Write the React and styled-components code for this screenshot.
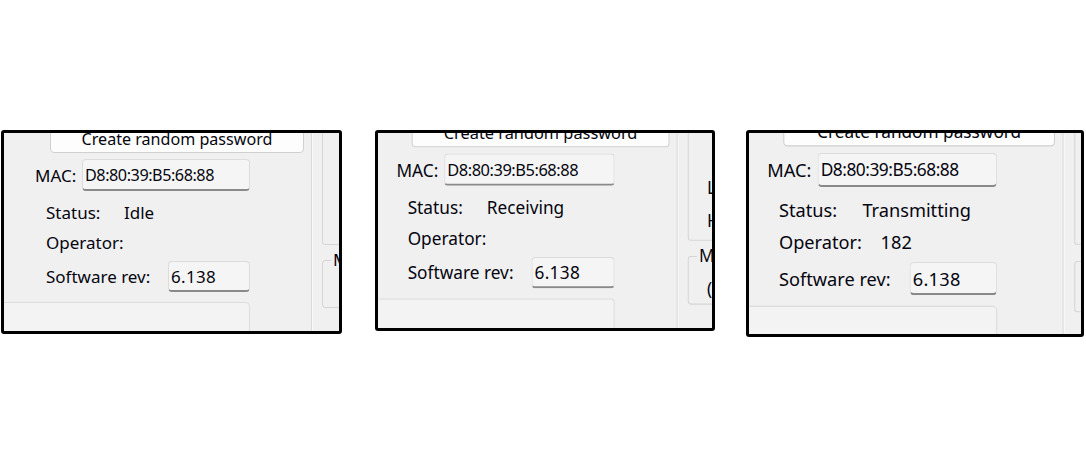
import React from 'react'
import styled, { createGlobalStyle } from 'styled-components'

const GlobalStyle = createGlobalStyle`
  body {
    margin: 0;
    background: #ffffff;
    font-family: "Noto Sans", "Open Sans", sans-serif;
  }
`

const Page = styled.div`
  display: flex;
  align-items: flex-start;
  padding: 130px 0 0 1px;
`

const Frame = styled.div`
  width: ${p => p.$w}px;
  height: ${p => p.$h}px;
  margin-left: ${p => p.$ml}px;
  box-sizing: border-box;
  border: 3px solid #000;
  border-radius: 3px;
  background: #f0f0f0;
  overflow: hidden;
  flex-shrink: 0;
`

const Screen = styled.div`
  display: flex;
  width: 460px;
  transform-origin: 0 0;
  transform: translate(${p => p.$dx}px, ${p => p.$dy}px) scale(${p => p.$z});
  color: #05050f;
  font-size: 17px;
`

const Left = styled.div`
  width: 307px;
  flex-shrink: 0;
  display: flex;
  flex-direction: column;
`

const Button = styled.div`
  margin: -10px 0 0 46px;
  width: 254px;
  height: 30px;
  box-sizing: border-box;
  border: 1px solid #d0d0d0;
  border-radius: 4px;
  background: #fdfdfd;
  display: flex;
  align-items: center;
  justify-content: center;
  padding-top: 1px;
  font-size: 16.1px;
`

const Row = styled.div`
  display: flex;
  align-items: center;
  height: ${p => p.$h}px;
  margin-top: ${p => p.$mt || 0}px;
  padding-left: ${p => p.$pl}px;
`

const Label = styled.span`
  width: ${p => p.$w}px;
  flex-shrink: 0;
  white-space: nowrap;
`

const TextBox = styled.div`
  width: ${p => p.$w}px;
  height: 100%;
  box-sizing: border-box;
  border: 1px solid #dcdcdc;
  border-bottom: 2px solid #8a8a8a;
  border-radius: 4px;
  background: #f5f5f5;
  display: flex;
  align-items: center;
  padding-left: 2px;
  white-space: nowrap;
  font-size: ${p => p.$fs || 17}px;
  letter-spacing: ${p => p.$ls || 0}px;
`

const BottomBox = styled.div`
  margin: 10px 0 0 -6px;
  width: 252px;
  height: 60px;
  box-sizing: border-box;
  border: 1px solid #dcdcdc;
  border-radius: 4px;
  background: #f3f3f3;
`

const Divider = styled.div`
  width: 1px;
  flex-shrink: 0;
  align-self: stretch;
  margin-top: -20px;
  background: #dadada;
  box-shadow: 1px 0 0 #fafafa;
`

const Right = styled.div`
  display: flex;
  flex-direction: column;
  padding-left: 10px;
`

const Group = styled.div`
  position: relative;
  width: 150px;
  height: ${p => p.$h}px;
  margin-top: ${p => p.$mt}px;
  box-sizing: border-box;
  border: 1px solid #d5d5d5;
  border-radius: 3px;
  display: flex;
  flex-direction: column;
  padding: ${p => p.$pt}px 0 0 18px;
  gap: 12px;
`

const Legend = styled.span`
  position: absolute;
  top: -10px;
  left: 8px;
  padding: 0 2px;
  background: #f0f0f0;
  line-height: 18px;
`

const Line = styled.span`
  line-height: 21px;
`

const MiniInput = styled.div`
  width: 80px;
  height: 22px;
  margin-top: 8px;
  display: flex;
  align-items: center;
`

const Panel = ({ w, h, ml, z, dx, dy, status, operator }) => (
  <Frame $w={w} $h={h} $ml={ml}>
    <Screen $z={z} $dx={dx} $dy={dy}>
      <Left>
        <Button>Create random password</Button>
        <Row $h={32} $mt={6} $pl={31}>
          <Label $w={47}>MAC:</Label>
          <TextBox $w={168} $fs={16.2} $ls={-0.45}>D8:80:39:B5:68:88</TextBox>
        </Row>
        <Row $h={30} $mt={6} $pl={42}>
          <Label $w={78}>Status:</Label>
          <span>{status}</span>
        </Row>
        <Row $h={30} $pl={42}>
          <Label $w={95}>Operator:</Label>
          <span>{operator}</span>
        </Row>
        <Row $h={31} $mt={4} $pl={42}>
          <Label $w={122}>Software rev:</Label>
          <TextBox $w={82} $ls={0.3}>6.138</TextBox>
        </Row>
        <BottomBox />
      </Left>
      <Divider />
      <Right>
        <Group $h={152} $mt={-40} $pt={88}>
          <Line>L</Line>
          <Line>H</Line>
        </Group>
        <Group $h={48} $mt={15} $pt={12}>
          <Legend>M</Legend>
          <MiniInput>(</MiniInput>
        </Group>
      </Right>
    </Screen>
  </Frame>
)

export default function App() {
  return (
    <>
      <GlobalStyle />
      <Page>
        <Panel w={341} h={204} ml={0} z={1} dx={0} dy={0} status="Idle" operator="" />
        <Panel w={340} h={201} ml={33} z={1.015} dx={-13} dy={-6} status="Receiving" operator="" />
        <Panel w={338} h={207} ml={31} z={1.07} dx={-15} dy={-8} status="Transmitting" operator="182" />
      </Page>
    </>
  )
}
